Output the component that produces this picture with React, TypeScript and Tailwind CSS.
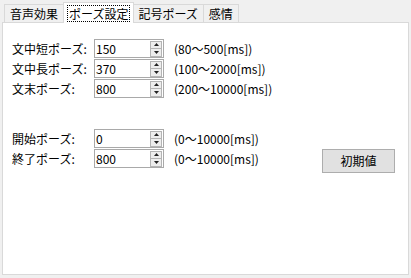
import React from "react";

const font = { fontFamily: '"Noto Sans CJK JP", "Noto Sans", sans-serif' };

interface PauseRow {
    label: string;
    value: string;
    range: string;
}

const groupA: PauseRow[] = [
    { label: "文中短ポーズ:", value: "150", range: "(80～500[ms])" },
    { label: "文中長ポーズ:", value: "370", range: "(100～2000[ms])" },
    { label: "文末ポーズ:", value: "800", range: "(200～10000[ms])" },
];

const groupB: PauseRow[] = [
    { label: "開始ポーズ:", value: "0", range: "(0～10000[ms])" },
    { label: "終了ポーズ:", value: "800", range: "(0～10000[ms])" },
];

function Spinner({ value }: { value: string }) {
    return (
        <div className="flex h-[19px] w-[70px] items-center border border-[#a9a9a9] bg-white pr-[1px]">
            <span className="flex-1 pl-[1px] text-[12px] leading-none">{value}</span>
            <div className="flex h-[16px] w-[12px] flex-col">
                <div className="flex flex-1 items-center justify-center border border-[#b4b4b4] bg-[#ededed]">
                    <svg width="5" height="3" viewBox="0 0 5 3"><path d="M2.5 0L5 3H0z" fill="#222" /></svg>
                </div>
                <div className="flex flex-1 items-center justify-center border border-t-0 border-[#b4b4b4] bg-[#ededed]">
                    <svg width="5" height="3" viewBox="0 0 5 3"><path d="M0 0H5L2.5 3z" fill="#222" /></svg>
                </div>
            </div>
        </div>
    );
}

function Row({ row, children }: { row: PauseRow; children?: React.ReactNode }) {
    return (
        <div className="flex h-[20px] items-start">
            <div className="flex h-[19px] w-[82px] items-center text-[12px]">{row.label}</div>
            <Spinner value={row.value} />
            <div className="ml-[10px] flex h-[19px] items-center text-[12px]">{row.range}</div>
            {children}
        </div>
    );
}

export default function App() {
    const tabs = ["音声効果", "ポーズ設定", "記号ポーズ", "感情"];
    const active = 1;

    return (
        <div className="h-[278px] w-[411px] bg-[#f0f0f0] px-[2px] pt-[2px] text-black" style={font}>
            <div className="flex h-[20px] items-end pl-[2px]">
                {tabs.map((t, i) =>
                    i === active ? (
                        <div
                            key={t}
                            className="relative z-10 -mx-[1px] -mb-[1px] flex h-[21px] items-center border border-b-0 border-[#d9d9d9] bg-white px-[3px]"
                        >
                            <span className="border border-dotted border-black px-[1px] text-[12px] leading-[15px]">{t}</span>
                        </div>
                    ) : (
                        <div
                            key={t}
                            className="flex h-[18px] items-center border border-b-0 border-[#d9d9d9] bg-[#f0f0f0] px-[5px] text-[12px] -ml-[1px] first:ml-0"
                        >
                            {t}
                        </div>
                    )
                )}
            </div>
            <div className="h-[253px] border border-[#d9d9d9] bg-white pl-[9px] pr-[13px] pt-[16px]">
                {groupA.map((r) => (
                    <Row key={r.label} row={r} />
                ))}
                <div className="h-[30px]" />
                {groupB.map((r, i) => (
                    <Row key={r.label} row={r}>
                        {i === groupB.length - 1 && (
                            <button className="ml-auto h-[24px] w-[73px] border border-[#adadad] bg-[#e1e1e1] text-[12px]">
                                初期値
                            </button>
                        )}
                    </Row>
                ))}
            </div>
        </div>
    );
}
